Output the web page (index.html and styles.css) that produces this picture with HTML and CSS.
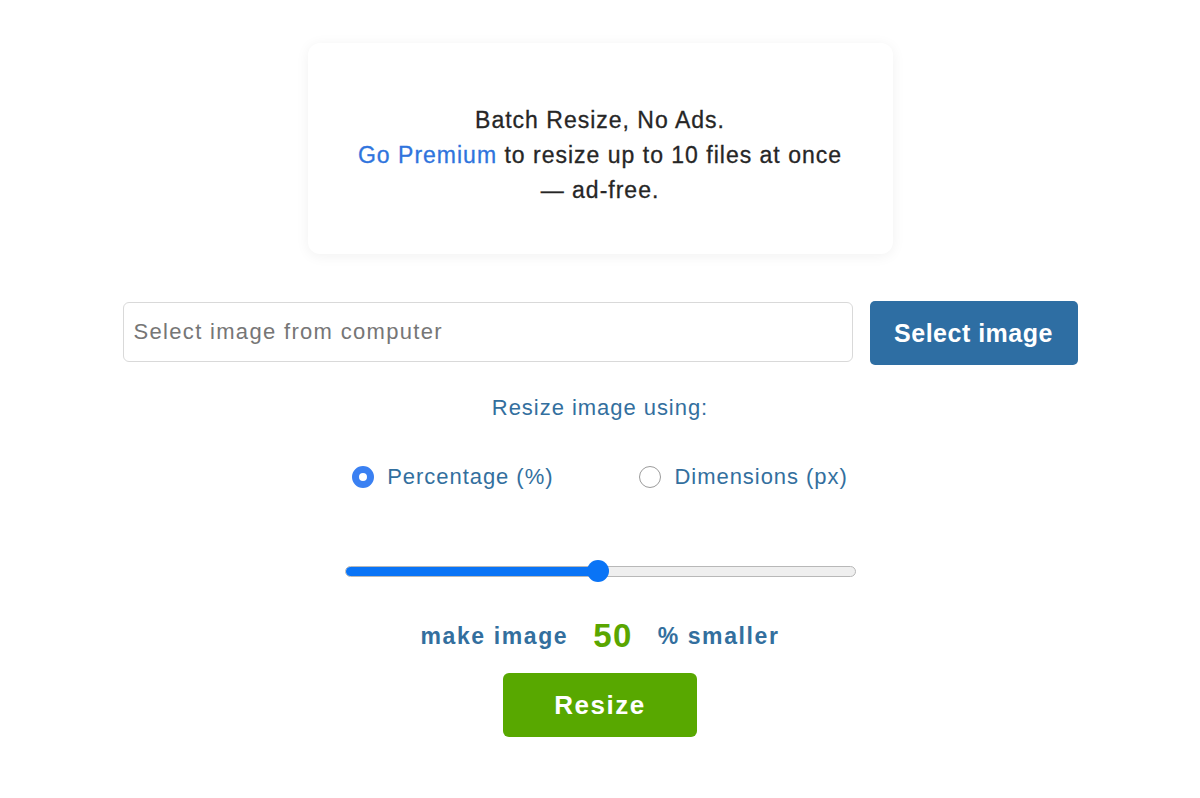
FILE: index.html
```html
<!DOCTYPE html>
<html lang="en">
<head>
<meta charset="utf-8">
<title>Resize Image</title>
<link rel="stylesheet" href="styles.css">
</head>
<body>
<main class="page">
  <section class="promo">
    <p class="promo-title">Batch Resize, No Ads.</p>
    <p class="promo-text"><a class="promo-link" href="#">Go Premium</a> to resize up to 10 files at once — ad-free.</p>
  </section>

  <div class="file-row">
    <input class="file-input" type="text" placeholder="Select image from computer">
    <button class="btn btn-select" type="button">Select image</button>
  </div>

  <p class="using">Resize image using:</p>

  <div class="modes">
    <label class="mode"><span class="radio radio-on"></span><span>Percentage (%)</span></label>
    <label class="mode"><span class="radio"></span><span>Dimensions (px)</span></label>
  </div>

  <div class="slider">
    <div class="slider-track">
      <div class="slider-fill" style="width: 50%"></div>
    </div>
    <div class="slider-thumb" style="left: 50%"></div>
  </div>

  <div class="amount">
    <span class="amount-label">make image</span>
    <span class="amount-value">50</span>
    <span class="amount-label">% smaller</span>
  </div>

  <div class="action">
    <button class="btn btn-resize" type="button">Resize</button>
  </div>
</main>
</body>
</html>
```
FILE: styles.css
```css
* {
  box-sizing: border-box;
}

html, body {
  margin: 0;
  padding: 0;
  background: #ffffff;
}

body {
  font-family: "Liberation Sans", Arial, sans-serif;
  letter-spacing: 0.06em;
  color: #222222;
}

.page {
  width: 955px;
  margin: 0 auto;
  padding-top: 43px;
  display: flex;
  flex-direction: column;
  align-items: center;
}

/* Promo card */
.promo {
  width: 585px;
  height: 211px;
  padding: 60px 44px 0;
  border-radius: 12px;
  background: #ffffff;
  box-shadow: 0 2px 14px rgba(0, 0, 0, 0.06);
  text-align: center;
  font-size: 23px;
  line-height: 35px;
  letter-spacing: 1px;
  color: #262626;
  -webkit-text-stroke: 0.3px #262626;
}

.promo-title,
.promo-text {
  margin: 0;
}

.promo-link {
  color: #2f74dd;
  text-decoration: none;
  -webkit-text-stroke: 0.3px #2f74dd;
}

/* File selection row */
.file-row {
  width: 100%;
  margin-top: 47px;
  display: flex;
  align-items: flex-start;
  gap: 17px;
}

.file-input {
  flex: 1;
  height: 60px;
  margin-top: 1px;
  padding: 0 10px;
  border: 1px solid #d9d9d9;
  border-radius: 6px;
  font-family: inherit;
  font-size: 22px;
  letter-spacing: 0.06em;
  color: #333333;
  outline: none;
}

.file-input::placeholder {
  color: #767676;
}

.btn {
  border: none;
  color: #ffffff;
  font-family: inherit;
  font-weight: bold;
  cursor: pointer;
}

.btn-select {
  width: 208px;
  height: 64px;
  border-radius: 5px;
  background: #2e6ea3;
  font-size: 25px;
  letter-spacing: 0.02em;
}

/* Resize mode */
.using {
  margin: 28px 0 0;
  font-size: 22px;
  line-height: 30px;
  color: #336f9e;
}

.modes {
  margin-top: 39px;
  display: flex;
  gap: 86px;
  height: 30px;
  align-items: center;
}

.mode {
  display: flex;
  align-items: center;
  gap: 13px;
  font-size: 22px;
  color: #336f9e;
  cursor: pointer;
}

.radio {
  width: 22px;
  height: 22px;
  border-radius: 50%;
  border: 1.5px solid #9b9b9b;
  background: #ffffff;
  flex-shrink: 0;
}

.radio-on {
  border: 7px solid #3a80f2;
  background: #ffffff;
}

/* Slider */
.slider {
  position: relative;
  width: 511px;
  height: 22px;
  margin-top: 68px;
  display: flex;
  align-items: center;
}

.slider-track {
  position: relative;
  width: 100%;
  height: 11px;
  border-radius: 6px;
  background: #efefef;
  border: 1px solid #b8b8b8;
  overflow: hidden;
}

.slider-fill {
  position: absolute;
  left: -1px;
  top: -1px;
  bottom: -1px;
  border-radius: 6px 0 0 6px;
  background: #0a74f6;
}

.slider-thumb {
  position: absolute;
  top: 0;
  width: 22px;
  height: 22px;
  margin-left: -13px;
  border-radius: 50%;
  background: #0a74f6;
}

/* Amount */
.amount {
  margin-top: 34px;
  height: 40px;
  display: flex;
  align-items: center;
  gap: 25px;
  color: #336f9e;
}

.amount-label {
  font-size: 23px;
  font-weight: bold;
  letter-spacing: 0.07em;
}

.amount-value {
  font-size: 33px;
  font-weight: bold;
  letter-spacing: 0.04em;
  color: #5aa600;
}

/* Resize button */
.action {
  margin-top: 17px;
}

.btn-resize {
  width: 194px;
  height: 64px;
  border-radius: 6px;
  background: #58a800;
  font-size: 26px;
  letter-spacing: 0.06em;
}
```
